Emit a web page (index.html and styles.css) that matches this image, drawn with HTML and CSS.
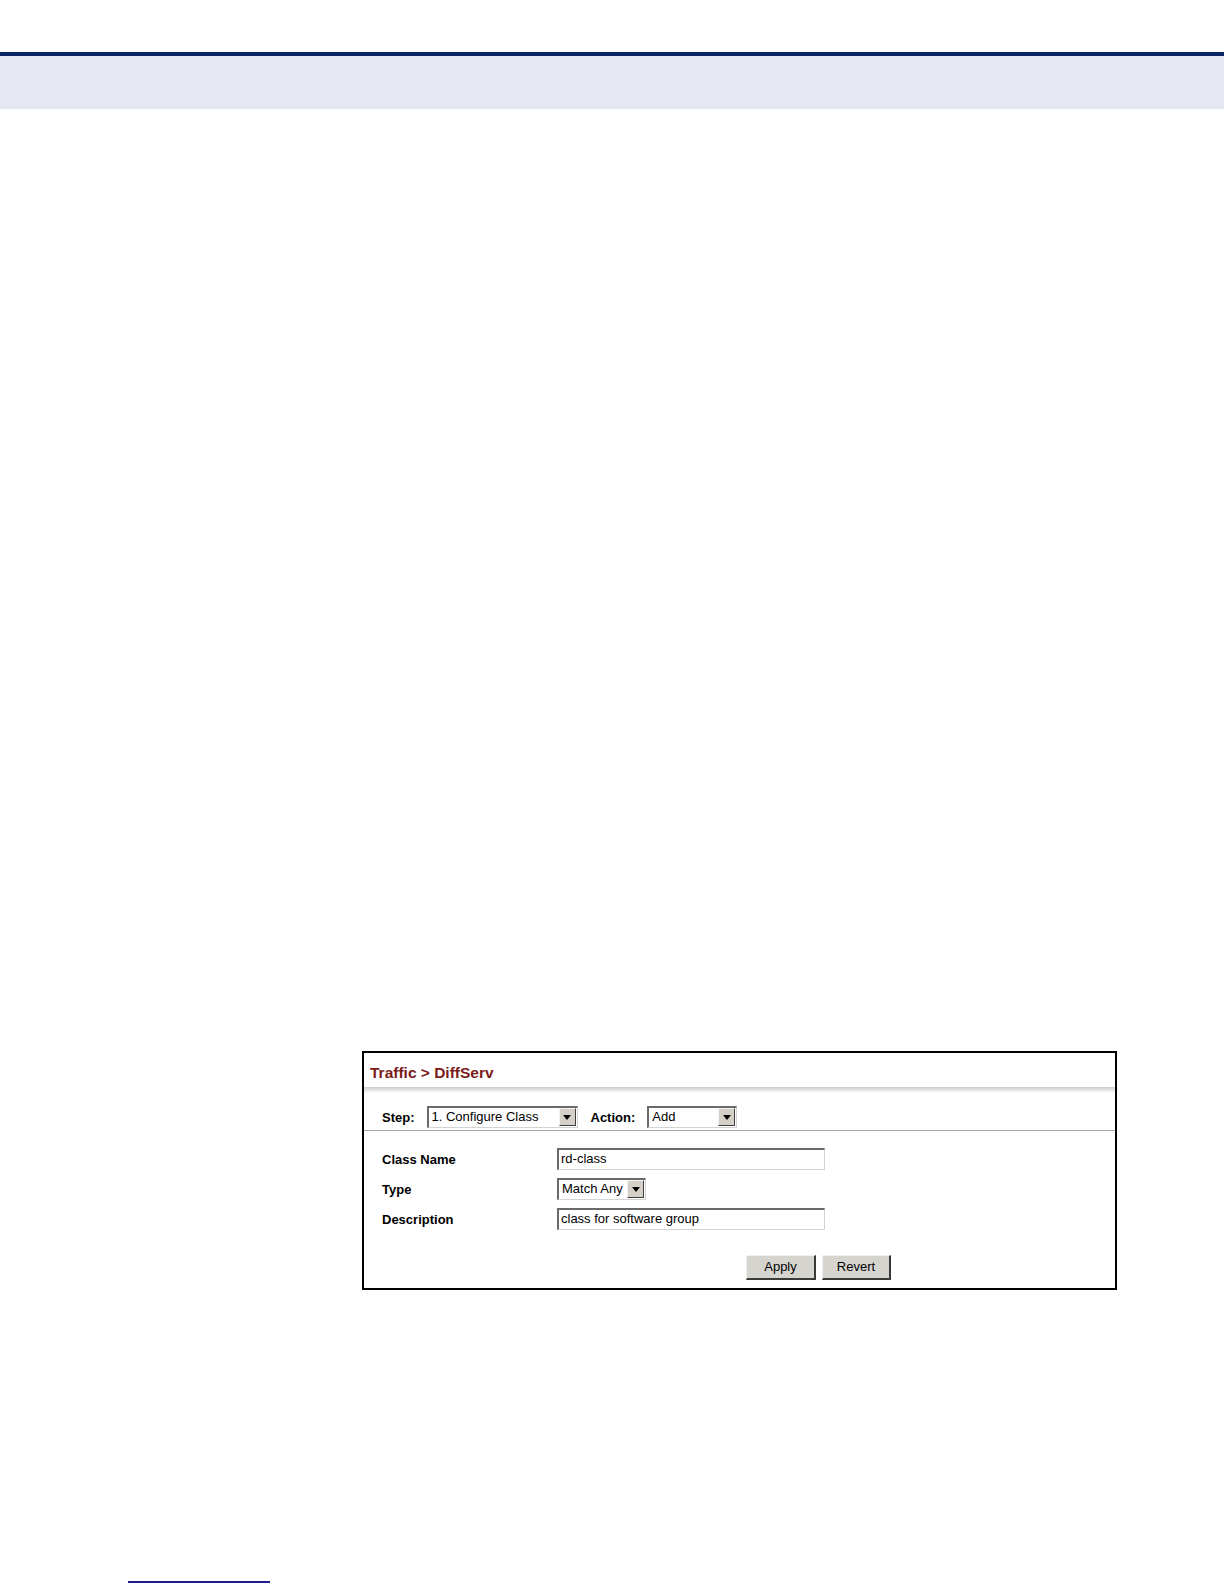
FILE: index.html
```html
<!DOCTYPE html>
<html>
<head>
<meta charset="utf-8">
<link rel="stylesheet" href="styles.css">
</head>
<body>
<header class="top-band"></header>
<main class="page">
  <section class="panel">
    <div class="panel-title">Traffic &gt; DiffServ</div>
    <div class="title-rule"></div>
    <div class="step-row">
      <span class="lbl">Step:</span>
      <div class="select sel-step"><span class="sel-text">1. Configure Class</span><span class="sel-btn"><span class="tri"></span></span></div>
      <span class="lbl lbl-action">Action:</span>
      <div class="select sel-action"><span class="sel-text">Add</span><span class="sel-btn"><span class="tri"></span></span></div>
    </div>
    <div class="form">
      <div class="row">
        <span class="flabel">Class Name</span>
        <div class="input">rd-class</div>
      </div>
      <div class="row">
        <span class="flabel">Type</span>
        <div class="select sel-type"><span class="sel-text">Match Any</span><span class="sel-btn"><span class="tri"></span></span></div>
      </div>
      <div class="row">
        <span class="flabel">Description</span>
        <div class="input">class for software group</div>
      </div>
    </div>
    <div class="buttons">
      <div class="btn btn-apply">Apply</div>
      <div class="btn btn-revert">Revert</div>
    </div>
  </section>
</main>
<footer class="foot"><div class="foot-line"></div></footer>
</body>
</html>
```
FILE: styles.css
```css
* { box-sizing: border-box; }
html, body { margin: 0; padding: 0; background: #ffffff; }
body {
  width: 1224px;
  height: 1584px;
  font-family: "Liberation Sans", Arial, sans-serif;
  color: #000;
  overflow: hidden;
}
.top-band {
  margin-top: 52px;
  height: 57px;
  border-top: 4px solid #0b2463;
  background: #e5e8f0;
}
.page {
  padding-top: 942px;
  padding-left: 362px;
}
.panel {
  width: 755px;
  height: 239px;
  border: 2px solid #000;
  background: #fff;
  display: flex;
  flex-direction: column;
}
.panel-title {
  height: 34px;
  padding: 11px 0 0 6px;
  font-size: 15.5px;
  font-weight: bold;
  color: #7a1b1b;
  line-height: 18px;
}
.title-rule {
  height: 6px;
  background: linear-gradient(#cdcdcd, #e6e6e6 50%, #ffffff);
}
.step-row {
  height: 38px;
  display: flex;
  align-items: center;
  padding: 11px 0 0 18px;
  border-bottom: 1px solid #a8a8a8;
}
.lbl {
  font-size: 13px;
  font-weight: bold;
  margin-right: 12px;
}
.lbl-action { margin-left: 13px; margin-right: 12px; }
.select {
  height: 22px;
  display: flex;
  align-items: stretch;
  border-top: 2px solid #6a6a6a;
  border-left: 2px solid #6a6a6a;
  border-right: 1px solid #d4d4d4;
  border-bottom: 1px solid #d4d4d4;
  background: #fff;
}
.sel-text {
  flex: 1;
  font-size: 13px;
  line-height: 18px;
  padding-left: 3px;
  white-space: nowrap;
}
.sel-btn {
  width: 17px;
  margin: 0 1px 1px 0;
  background: #d4d0c8;
  border-top: 1px solid #f4f4f4;
  border-left: 1px solid #f4f4f4;
  border-right: 1px solid #404040;
  border-bottom: 1px solid #404040;
  display: flex;
  align-items: center;
  justify-content: center;
}
.tri {
  width: 0; height: 0;
  border-left: 4px solid transparent;
  border-right: 4px solid transparent;
  border-top: 5px solid #000;
}
.sel-step { width: 151px; }
.sel-action { width: 90px; }
.sel-type { width: 89px; }
.form {
  padding: 17px 0 0 18px;
  display: flex;
  flex-direction: column;
  gap: 8px;
}
.row {
  display: flex;
  align-items: center;
  height: 22px;
}
.flabel {
  width: 175px;
  font-size: 13px;
  font-weight: bold;
}
.input {
  width: 268px;
  height: 22px;
  border-top: 2px solid #6a6a6a;
  border-left: 2px solid #6a6a6a;
  border-right: 1px solid #d4d4d4;
  border-bottom: 1px solid #d4d4d4;
  font-size: 13px;
  line-height: 18px;
  padding-left: 2px;
}
.buttons {
  display: flex;
  gap: 6px;
  padding: 25px 0 0 382px;
}
.btn {
  height: 25px;
  background: #d6d4cf;
  border-top: 1px solid #f0f0f0;
  border-left: 1px solid #f0f0f0;
  border-right: 2px solid #3a3a3a;
  border-bottom: 2px solid #3a3a3a;
  font-size: 13px;
  line-height: 22px;
  text-align: center;
}
.btn-apply { width: 70px; }
.btn-revert { width: 69px; }
.foot {
  padding-top: 291px;
  padding-left: 128px;
}
.foot-line {
  width: 142px;
  height: 2px;
  background: #1c1c8a;
}
```
